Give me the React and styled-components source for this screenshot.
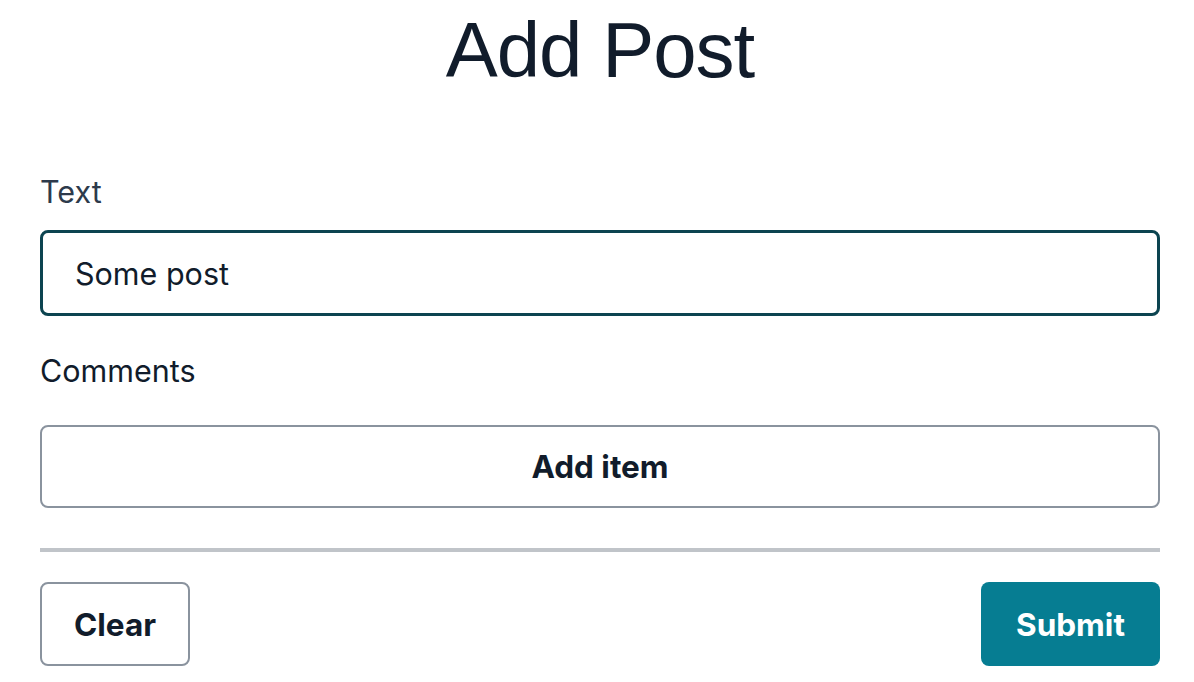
import React, { useState } from 'react';
import styled, { createGlobalStyle } from 'styled-components';

const GlobalStyle = createGlobalStyle`
  html, body {
    margin: 0;
    padding: 0;
    background: #fff;
  }
  body {
    font-family: Inter, "Noto Sans", sans-serif;
    color: #111c2b;
  }
  * {
    box-sizing: border-box;
  }
`;

export default function App() {
  const [text, setText] = useState('Some post');

  return (
    <>
      <GlobalStyle />
      <StyledPage>
        <h1 className="title">Add Post</h1>
        <form className="form" onSubmit={(e) => e.preventDefault()}>
          <label className="label" htmlFor="text">
            Text
          </label>
          <input
            id="text"
            className="text-input"
            value={text}
            onChange={(e) => setText(e.target.value)}
          />
          <p className="label comments">Comments</p>
          <button type="button" className="add-btn">
            Add item
          </button>
          <hr className="divider" />
          <div className="button-wrap">
            <button type="button" className="clear-btn" onClick={() => setText('')}>
              Clear
            </button>
            <button type="submit" className="submit-btn">
              Submit
            </button>
          </div>
        </form>
      </StyledPage>
    </>
  );
}

const StyledPage = styled.div`
  padding: 0 34px 0 40px;

  .title {
    margin: 5px 0 0;
    text-align: center;
    font-family: "Liberation Sans", Arial, sans-serif;
    font-weight: 400;
    font-size: 78px;
    line-height: 90px;
    color: #111c2b;
    letter-spacing: -1px;
  }

  .form {
    display: flex;
    flex-direction: column;
    margin-top: 79px;
  }

  .label {
    margin: 0;
    font-size: 30.5px;
    line-height: 36px;
    color: #2d3a4b;
  }

  .comments {
    margin-top: 37px;
    color: #111c2b;
  }

  .text-input {
    margin-top: 20px;
    height: 86px;
    padding: 0 32px;
    border: 3px solid #0c4450;
    border-radius: 8px;
    font-family: inherit;
    font-size: 30.5px;
    color: #111c2b;
    outline: none;
  }

  button {
    font-family: inherit;
    font-size: 31.5px;
    font-weight: 700;
    cursor: pointer;
  }

  .add-btn {
    margin-top: 36px;
    height: 83px;
    background: #fff;
    border: 2px solid #8a939e;
    border-radius: 8px;
    color: #111c2b;
  }

  .divider {
    margin: 40px 0 0;
    border: none;
    height: 4px;
    background: #c0c4c9;
  }

  .button-wrap {
    display: flex;
    justify-content: space-between;
    margin-top: 30px;
  }

  .clear-btn {
    width: 150px;
    height: 84px;
    background: #fff;
    border: 2px solid #8a939e;
    border-radius: 8px;
    color: #111c2b;
  }

  .submit-btn {
    width: 179px;
    height: 84px;
    background: #067d92;
    border: none;
    border-radius: 8px;
    color: #fff;
  }
`;
